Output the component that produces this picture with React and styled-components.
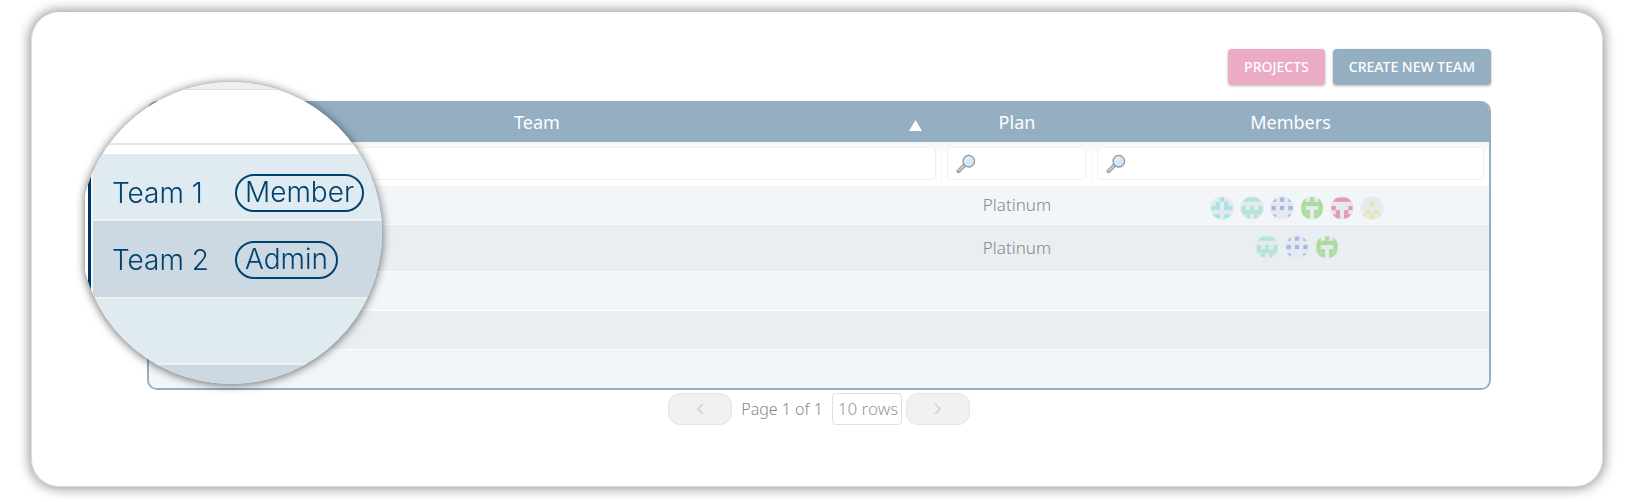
import React, { useId } from 'react';
import { createGlobalStyle, styled } from 'styled-components';

const GlobalStyle = createGlobalStyle`
    * {
        box-sizing: border-box;
    }
    body {
        margin: 0;
        background-color: #fff;
        color: #888;
        font-family: 'Noto Sans', 'Open Sans', sans-serif;
        font-size: 16px;
        font-weight: 300;
    }
    button, input, select {
        font-family: inherit;
    }
`;
const Page = styled.main`
    padding: 12px 31px 15px;
`;
const Card = styled.section`
    position: relative;
    padding: 37px 111px 61px 115px;
    border-radius: 28px;
    border: solid 1px #ddd;
    border-top-width: 0;
    background-color: #fff;
    box-shadow: 0 0 12px 2px rgba(0, 0, 0, 0.4);
`;
const Toolbar = styled.div`
    display: flex;
    justify-content: flex-end;
    gap: 8px;
    margin-bottom: 16px;
`;
const ToolBtn = styled.button`
    height: 36px;
    padding: 0 16px 2px;
    border: none;
    border-radius: 4px;
    background-color: ${(props) => props.$bg};
    box-shadow: 0 1px 3px rgba(0, 0, 0, 0.3);
    color: #fff;
    font-size: 14px;
    font-weight: 500;
    text-transform: uppercase;
`;
const TableWrap = styled.div`
    overflow: hidden;
    border: solid 2px #94aec2;
    border-top: none;
    border-radius: 10px;
`;
const Table = styled.table`
    width: 100%;
    border-collapse: separate;
    border-spacing: 0;
    table-layout: fixed;
`;
const HeadCell = styled.th`
    width: ${(props) => props.$width};
    height: 41px;
    padding: 0;
    background-color: #94aec2;
    color: #fff;
    font-size: 18px;
    font-weight: 400;
`;
const SortHead = styled.div`
    display: flex;
    align-items: center;
    padding: 0 20px 0 16px;
    span {
        flex: 1;
    }
    svg {
        margin-top: 7px;
    }
`;
const FilterCell = styled.td`
    height: 43px;
    padding: 0 5px;
    background: linear-gradient(#f6f6f6, #fff 12px);
    border-right: solid 1px #f8f8f8;
    &:last-child {
        border-right: none;
    }
`;
const FilterBox = styled.label`
    display: flex;
    align-items: center;
    height: 33px;
    padding: 0 8px;
    border: solid 1px #f1f1f1;
    border-radius: 3px;
    background-color: #fff;
    svg {
        flex: none;
    }
    input {
        flex: 1;
        min-width: 0;
        border: none;
        outline: none;
        background: none;
        font-size: 16px;
    }
`;
const Row = styled.tr`
    height: ${(props) => (props.$tall ? '47px' : '39px')};
    background-color: #f2f6f9;
    &:nth-child(odd) {
        background-color: #e9eef2;
    }
`;
const Cell = styled.td`
    padding: 0;
    border-top: solid 1px #fbfbfb;
    font-size: 17px;
    line-height: 24px;
    text-align: center;
`;
const MembersCell = styled(Cell)`
    padding: 10px 0 0 12px;
    vertical-align: top;
`;
const Avatars = styled.div`
    display: flex;
    justify-content: center;
    gap: 6px;
`;
const Pager = styled.nav`
    display: flex;
    justify-content: center;
    align-items: center;
    margin-top: 3px;
`;
const PageBtn = styled.button`
    display: flex;
    align-items: center;
    justify-content: center;
    width: 64px;
    height: 32px;
    padding: 0;
    border: solid 1px #e4e4e4;
    border-radius: 12px;
    background-color: #f1f1f1;
`;
const PageInfo = styled.span`
    margin: 0 9px;
    font-size: 16px;
`;
const RowsSelect = styled.select`
    appearance: none;
    width: 70px;
    height: 32px;
    margin-right: 4px;
    padding: 0 0 2px 5px;
    border: solid 1px #e0e0e0;
    border-radius: 4px;
    background-color: #fff;
    color: #999;
    font-size: 17px;
    font-weight: 300;
`;
// The shadow sits on the wrapper so that clip-path does not cut it off.
const Lens = styled.aside`
    position: absolute;
    top: 70px;
    left: 53px;
    filter: drop-shadow(0 1px 5px rgba(0, 0, 0, 0.6));
`;
const LensGlass = styled.div`
    display: flex;
    flex-direction: column;
    width: 297px;
    height: 302px;
    overflow: hidden;
    clip-path: circle(151px at 146px 151px);
    background-color: #fff;
`;
const LensTop = styled.div`
    flex: none;
    height: 8px;
    border-bottom: solid 1px #ddd;
    background-color: #efefef;
`;
const LensHead = styled.div`
    flex: none;
    height: 55px;
    margin-bottom: 9px;
    border-bottom: solid 2px #e4e4e4;
`;
const LensBody = styled.div`
    flex: 1;
    min-height: 0;
    margin-left: 3px;
    border-left: solid 3px #003366;
`;
const LensRow = styled.div`
    display: grid;
    grid-template-columns: 123px 1fr;
    align-items: center;
    justify-items: start;
    height: ${(props) => props.$height};
    padding: ${(props) => props.$pad || '0'} 0 0 19px;
    border-left: solid 2px #f4f4f4;
    border-bottom: solid 2px #efefef;
    background-color: ${(props) => (props.$dark ? '#ccd8e2' : '#dfeaf1')};
    color: #00426f;
    font-family: Inter, Lato, sans-serif;
    font-size: 28px;
    font-weight: 300;
`;
const RoleTag = styled.span`
    height: 38px;
    padding: 0 8px;
    border: solid 2px #00426f;
    border-radius: 19px;
    line-height: 32px;
`;

const avatars = {
    aqua: { color: '#a8e4e6', cells: ['..X..', '.X.X.', 'XX.XX', '.....', 'XX.XX'] },
    mint: { color: '#b4e6d4', cells: ['XXXXX', '.....', 'X.X.X', 'XXXXX', '.X.X.'] },
    blue: { color: '#a4b8e8', cells: ['X.X.X', '.....', 'X.X.X', '.....', 'X...X'] },
    green: { color: '#aadc9e', cells: ['X.X.X', 'XXXXX', 'X...X', 'XX.XX', 'XX.XX'] },
    pink: { color: '#e09ab8', cells: ['XXXXX', '.....', 'X...X', '.X.X.', 'XX.XX'] },
    yellow: { color: '#e4e6a4', cells: ['.....', '..X..', '.....', '.X.X.', 'X.X.X'] }
};

const teams = [
    { id: 1, plan: 'Platinum', members: ['aqua', 'mint', 'blue', 'green', 'pink', 'yellow'] },
    { id: 2, plan: 'Platinum', members: ['mint', 'blue', 'green'], tall: true },
    { id: 3, members: [] },
    { id: 4, members: [] },
    { id: 5, members: [] }
];

function Avatar({ name }) {
    const clipId = useId();
    const { color, cells } = avatars[name];

    return (
        <svg width="24" height="24" viewBox="0 0 24 24" role="img" aria-label={`${name} member`}>
            <clipPath id={clipId}>
                <circle cx="12" cy="12" r="11.3" />
            </clipPath>
            <circle cx="12" cy="12" r="11.7" fill="#e6eaef" />
            <g clipPath={`url(#${clipId})`} fill={color}>
                {cells.map((line, y) =>
                    line.split('').map((cell, x) => {
                        return cell === 'X' ? <rect key={`${x}-${y}`} x={1.5 + x * 4.2} y={1.5 + y * 4.2} width="4.3" height="4.3" /> : null;
                    })
                )}
            </g>
        </svg>
    );
}

function SearchIcon() {
    return (
        <svg width="20" height="20" viewBox="0 0 20 20" aria-hidden="true">
            <path d="M2.6 17.2 8.6 11.2" stroke="#999" strokeWidth="4" strokeLinecap="round" />
            <path d="M2.8 16.8 8.6 11" stroke="#c8c8c8" strokeWidth="2" strokeLinecap="round" />
            <circle cx="12.8" cy="7.2" r="5.8" fill="#cfe7f8" stroke="#999" strokeWidth="1.3" />
            <path d="M9 9 14.6 3.4A4.4 4.4 0 0 0 9 9Z" fill="#e2f1fb" />
        </svg>
    );
}

function Chevron({ d }) {
    return (
        <svg width="8" height="12" viewBox="0 0 8 12" fill="none" stroke="#d8d8d8" strokeWidth="2" aria-hidden="true">
            <path d={d} />
        </svg>
    );
}

function Filter({ label }) {
    return (
        <FilterCell>
            <FilterBox>
                <SearchIcon />
                <input type="text" aria-label={label} />
            </FilterBox>
        </FilterCell>
    );
}

function App() {
    return (
        <Page>
            <GlobalStyle />
            <Card>
                <Toolbar>
                    <ToolBtn $bg="#ebabc5">Projects</ToolBtn>
                    <ToolBtn $bg="#94aec2">Create new team</ToolBtn>
                </Toolbar>
                <TableWrap>
                    <Table>
                        <thead>
                            <tr>
                                <HeadCell aria-sort="ascending">
                                    <SortHead>
                                        <span>Team</span>
                                        <svg width="13" height="11" viewBox="0 0 13 11" aria-hidden="true">
                                            <path d="M6.5 0 13 11H0Z" fill="#fff" />
                                        </svg>
                                    </SortHead>
                                </HeadCell>
                                <HeadCell $width="150px">Plan</HeadCell>
                                <HeadCell $width="397px">Members</HeadCell>
                            </tr>
                        </thead>
                        <tbody>
                            <tr>
                                <Filter label="Filter by team" />
                                <Filter label="Filter by plan" />
                                <Filter label="Filter by members" />
                            </tr>
                            {teams.map((team) => {
                                return (
                                    <Row key={team.id} $tall={team.tall}>
                                        <Cell />
                                        <Cell>{team.plan}</Cell>
                                        <MembersCell>
                                            <Avatars>
                                                {team.members.map((name) => (
                                                    <Avatar key={name} name={name} />
                                                ))}
                                            </Avatars>
                                        </MembersCell>
                                    </Row>
                                );
                            })}
                        </tbody>
                    </Table>
                </TableWrap>
                <Pager>
                    <PageBtn aria-label="Previous page">
                        <Chevron d="M7 1 2 6l5 5" />
                    </PageBtn>
                    <PageInfo>Page 1 of 1</PageInfo>
                    <RowsSelect aria-label="Rows per page">
                        <option>10 rows</option>
                    </RowsSelect>
                    <PageBtn aria-label="Next page">
                        <Chevron d="m1 1 5 5-5 5" />
                    </PageBtn>
                </Pager>
                <Lens>
                    <LensGlass>
                        <LensTop />
                        <LensHead />
                        <LensBody>
                            <LensRow $height="67px" $pad="12px">
                                Team 1<RoleTag>Member</RoleTag>
                            </LensRow>
                            <LensRow $height="78px" $pad="2px" $dark>
                                Team 2<RoleTag>Admin</RoleTag>
                            </LensRow>
                            <LensRow $height="66px" />
                            <LensRow $height="30px" $dark />
                        </LensBody>
                    </LensGlass>
                </Lens>
            </Card>
        </Page>
    );
}

export default App;
